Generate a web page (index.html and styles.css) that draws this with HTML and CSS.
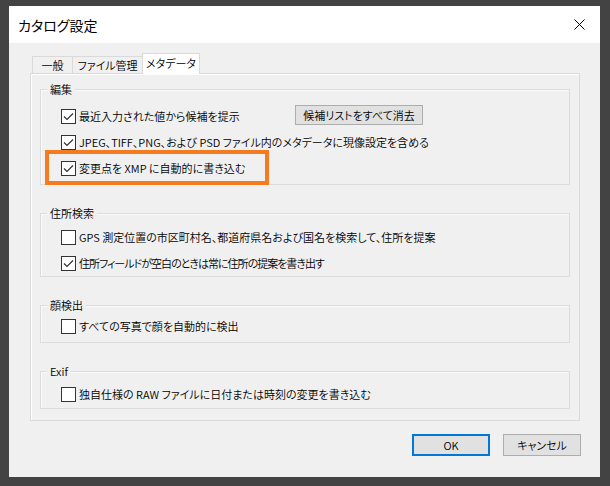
FILE: index.html
```html
<!DOCTYPE html>
<html lang="ja">
<head>
    <meta charset="UTF-8">
    <title>カタログ設定</title>
    <link rel="stylesheet" href="styles.css">
</head>
<body>
<div class="dialog">
    <!-- タイトルバー -->
    <div class="titlebar">
        <span class="title">カタログ設定</span>
        <svg class="close" width="11" height="11" viewBox="0 0 11 11">
            <path d="M0.5 0.5 L10.5 10.5 M10.5 0.5 L0.5 10.5" stroke="#000" stroke-width="1" fill="none"/>
        </svg>
    </div>

    <div class="dialog-body">
        <div class="tabs">
            <div class="tab tab-general">一般</div>
            <div class="tab tab-files">ファイル管理</div>
            <div class="tab tab-meta active">メタデータ</div>
        </div>

        <div class="panel">
            <!-- 編集 -->
            <div class="group">
                <div class="group-title">編集</div>
                <div class="rows rows-edit">
                    <div class="row">
                        <span class="check on"><svg width="13" height="13" viewBox="0 0 13 13"><polyline points="2,6.5 5,9.5 11,3.5"/></svg></span>
                        <span class="label label-fixed">最近入力された値から候補を提示</span>
                        <button class="btn btn-clear">候補リストをすべて消去</button>
                    </div>
                    <div class="row">
                        <span class="check on"><svg width="13" height="13" viewBox="0 0 13 13"><polyline points="2,6.5 5,9.5 11,3.5"/></svg></span>
                        <span class="label">JPEG、TIFF、PNG、および PSD ファイル内のメタデータに現像設定を含める</span>
                    </div>
                    <div class="row row-marked">
                        <span class="check on"><svg width="13" height="13" viewBox="0 0 13 13"><polyline points="2,6.5 5,9.5 11,3.5"/></svg></span>
                        <span class="label">変更点を XMP に自動的に書き込む</span>
                        <span class="highlight"></span>
                    </div>
                </div>
            </div>

            <!-- 住所検索 -->
            <div class="group">
                <div class="group-title">住所検索</div>
                <div class="rows rows-address">
                    <div class="row">
                        <span class="check"></span>
                        <span class="label">GPS 測定位置の市区町村名、都道府県名および国名を検索して、住所を提案</span>
                    </div>
                    <div class="row">
                        <span class="check on"><svg width="13" height="13" viewBox="0 0 13 13"><polyline points="2,6.5 5,9.5 11,3.5"/></svg></span>
                        <span class="label label-tight">住所フィールドが空白のときは常に住所の提案を書き出す</span>
                    </div>
                </div>
            </div>

            <!-- 顔検出 -->
            <div class="group">
                <div class="group-title">顔検出</div>
                <div class="rows rows-face">
                    <div class="row">
                        <span class="check"></span>
                        <span class="label">すべての写真で顔を自動的に検出</span>
                    </div>
                </div>
            </div>

            <!-- Exif -->
            <div class="group">
                <div class="group-title">Exif</div>
                <div class="rows rows-exif">
                    <div class="row">
                        <span class="check"></span>
                        <span class="label">独自仕様の RAW ファイルに日付または時刻の変更を書き込む</span>
                    </div>
                </div>
            </div>
        </div>

        <div class="buttons">
            <button class="btn btn-default">OK</button>
            <button class="btn">キャンセル</button>
        </div>
    </div>
</div>
</body>
</html>
```

FILE: styles.css
```css
body {
    margin: 0;
    padding: 6px 0 0 9px;
    background-color: #434343;
    font-family: "Noto Sans CJK JP", sans-serif;
    font-feature-settings: "palt";
    font-size: 11px;
    font-weight: 350;
    color: #000;
}

/* ウィンドウ */
.dialog {
    width: 591px;
    height: 471px;
    background-color: #f0f0f0;
    display: flex;
    flex-direction: column;
}

.titlebar {
    height: 37px;
    background-color: #fff;
    display: flex;
    align-items: center;
    justify-content: space-between;
    padding-left: 9px;
    flex-shrink: 0;
}

.title {
    font-size: 14px;
    font-weight: 400;
}

.close {
    margin-right: 15px;
    margin-top: -1px;
}

.dialog-body {
    padding: 10px 20px 0 21px;
}

/* タブ */
.tabs {
    display: flex;
    align-items: flex-end;
    height: 20px;
    padding-left: 2px;
}

.tab {
    height: 17px;
    line-height: 16px;
    box-sizing: border-box;
    border: 1px solid #d9d9d9;
    border-bottom: none;
    background-color: #f0f0f0;
    text-align: center;
    margin-right: -1px;
}

.tab-general { width: 41px; }
.tab-files { width: 71px; }
.tab-meta { width: 58px; }

.tab.active {
    height: 21px;
    line-height: 19px;
    background-color: #fff;
    margin-bottom: -1px;
    position: relative;
    z-index: 1;
}

.panel {
    width: 550px;
    height: 348px;
    box-sizing: border-box;
    border: 1px solid #d9d9d9;
    box-shadow: inset 1px 1px 0 #fff;
    padding: 15px 9px 0;
}

/* グループボックス */
.group {
    border: 1px solid #dcdcdc;
    box-shadow: inset 1px 1px 0 #fafafa;
    margin-top: 28px;
}

.group:first-child {
    margin-top: 0;
}

.group-title {
    width: fit-content;
    height: 16px;
    line-height: 16px;
    margin: -9px 0 -7px 6px;
    padding: 0 3px;
    background-color: #f0f0f0;
    position: relative;
}

.rows {
    padding-left: 20px;
}

.rows-edit { padding-top: 13px; padding-bottom: 3px; }
.rows-address { padding-top: 10px; padding-bottom: 0; }
.rows-face { padding-top: 7px; padding-bottom: 3px; }
.rows-exif { padding-top: 9px; padding-bottom: 1px; }

.row {
    height: 26px;
    display: flex;
    align-items: center;
}

.check {
    width: 15px;
    height: 15px;
    box-sizing: border-box;
    border: 1px solid #333;
    background-color: #fff;
    margin-right: 3px;
    flex-shrink: 0;
}

.check svg {
    display: block;
}

.check polyline {
    fill: none;
    stroke: #333;
    stroke-width: 1.2;
}

.label-fixed {
    width: 216px;
}

.label-tight {
    letter-spacing: -1px;
}

/* 注目枠 */
.row-marked {
    position: relative;
}

.highlight {
    position: absolute;
    left: -16px;
    top: -5px;
    width: 224px;
    height: 35px;
    box-sizing: border-box;
    border: 4px solid #f47b20;
}

/* ボタン */
.btn {
    font-family: inherit;
    font-feature-settings: "palt";
    font-size: 11px;
    font-weight: 350;
    color: #000;
    background-color: #e1e1e1;
    border: 1px solid #adadad;
    padding: 0;
    box-sizing: border-box;
}

.btn-clear {
    width: 128px;
    height: 20px;
    margin-top: -3px;
}

.buttons {
    display: flex;
    justify-content: flex-end;
    gap: 13px;
    margin-top: 13px;
    margin-right: -1px;
}

.buttons .btn {
    width: 78px;
    height: 22px;
}

.btn-default {
    border: 2px solid #0078d7;
}
```
